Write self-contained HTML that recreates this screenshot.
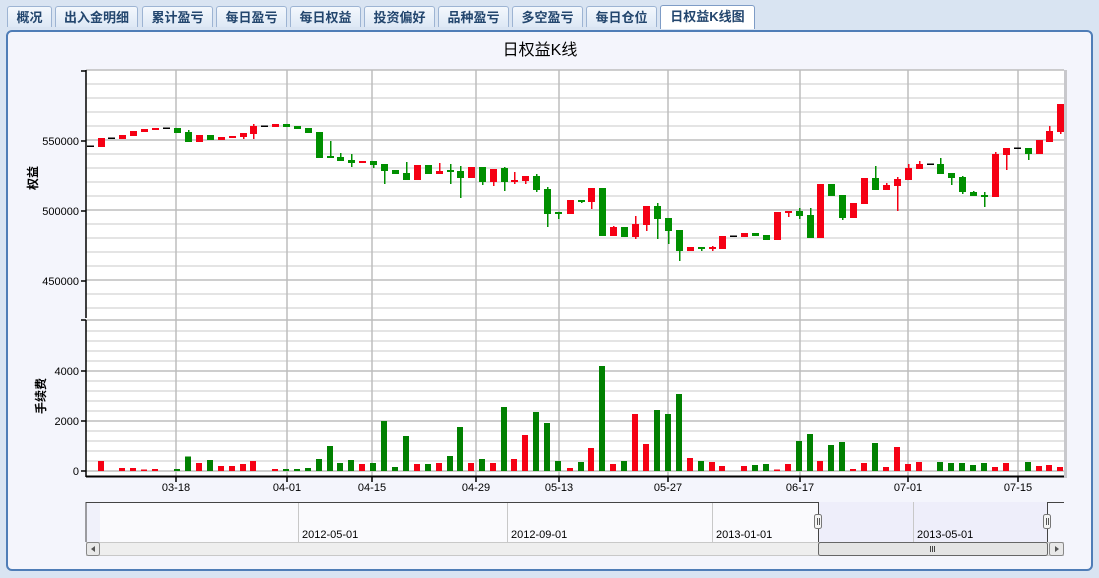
<!DOCTYPE html>
<html><head><meta charset="utf-8"><style>
body{margin:0;width:1099px;height:578px;overflow:hidden;background:#d9e4f2;font-family:"Liberation Sans","Noto Sans CJK SC",sans-serif;}
.tab{position:absolute;top:6px;height:21px;border:1px solid #9db4d3;border-bottom:none;border-radius:3px 3px 0 0;background:linear-gradient(#f4f8fd,#dde8f5);font-size:13px;font-weight:bold;color:#23466e;text-align:center;line-height:21px;box-sizing:border-box}
.tab.a{background:#fff;top:5px;height:24px;border-color:#7e9cc6}
#panel{position:absolute;left:6px;top:30px;width:1087px;height:541px;border:2px solid #4f7db7;border-radius:6px;box-sizing:border-box;background:#f4f5fc}
</style></head><body>
<div class="tab" style="left:7px;width:45px">概况</div>
<div class="tab" style="left:55px;width:83px">出入金明细</div>
<div class="tab" style="left:142px;width:71px">累计盈亏</div>
<div class="tab" style="left:216px;width:71px">每日盈亏</div>
<div class="tab" style="left:290px;width:71px">每日权益</div>
<div class="tab" style="left:364px;width:71px">投资偏好</div>
<div class="tab" style="left:438px;width:71px">品种盈亏</div>
<div class="tab" style="left:512px;width:71px">多空盈亏</div>
<div class="tab" style="left:586px;width:71px">每日仓位</div>
<div class="tab a" style="left:660px;width:95px">日权益K线图</div>
<div id="panel"></div>
<svg width="1099" height="578" style="position:absolute;left:0;top:0" font-family="Liberation Sans, Noto Sans CJK SC, sans-serif">
<text x="540" y="55" font-size="16" text-anchor="middle" fill="#000">日权益K线</text>
<rect x="86" y="70" width="978" height="406" fill="#fff"/>
<rect x="1064" y="70" width="3" height="408" fill="#c8c8cc"/>
<g stroke="#dcdcdc" stroke-width="1.5">
<line x1="86" x2="1064" y1="84" y2="84"/><line x1="86" x2="1064" y1="98" y2="98"/><line x1="86" x2="1064" y1="112" y2="112"/><line x1="86" x2="1064" y1="126" y2="126"/><line x1="86" x2="1064" y1="154" y2="154"/><line x1="86" x2="1064" y1="168" y2="168"/><line x1="86" x2="1064" y1="182" y2="182"/><line x1="86" x2="1064" y1="196" y2="196"/><line x1="86" x2="1064" y1="224" y2="224"/><line x1="86" x2="1064" y1="238" y2="238"/><line x1="86" x2="1064" y1="252" y2="252"/><line x1="86" x2="1064" y1="266" y2="266"/><line x1="86" x2="1064" y1="294" y2="294"/><line x1="86" x2="1064" y1="308" y2="308"/>
<line x1="86" x2="1064" y1="331" y2="331"/><line x1="86" x2="1064" y1="341" y2="341"/><line x1="86" x2="1064" y1="351" y2="351"/><line x1="86" x2="1064" y1="361" y2="361"/><line x1="86" x2="1064" y1="381" y2="381"/><line x1="86" x2="1064" y1="391" y2="391"/><line x1="86" x2="1064" y1="401" y2="401"/><line x1="86" x2="1064" y1="411" y2="411"/><line x1="86" x2="1064" y1="431" y2="431"/><line x1="86" x2="1064" y1="441" y2="441"/><line x1="86" x2="1064" y1="451" y2="451"/><line x1="86" x2="1064" y1="461" y2="461"/>
</g>
<g stroke="#bdbdbd" stroke-width="1.5">
<line x1="86" x2="1064" y1="70" y2="70"/><line x1="86" x2="1064" y1="140" y2="140"/><line x1="86" x2="1064" y1="210" y2="210"/><line x1="86" x2="1064" y1="280" y2="280"/><line x1="86" x2="1064" y1="320" y2="320"/><line x1="86" x2="1064" y1="371" y2="371"/><line x1="86" x2="1064" y1="421" y2="421"/><line x1="86" x2="1064" y1="471" y2="471"/>
<line x1="176" x2="176" y1="70" y2="476"/><line x1="287" x2="287" y1="70" y2="476"/><line x1="372" x2="372" y1="70" y2="476"/><line x1="476" x2="476" y1="70" y2="476"/><line x1="559" x2="559" y1="70" y2="476"/><line x1="668" x2="668" y1="70" y2="476"/><line x1="800" x2="800" y1="70" y2="476"/><line x1="908" x2="908" y1="70" y2="476"/><line x1="1018" x2="1018" y1="70" y2="476"/>
</g>
<g stroke="#000" stroke-width="1.5">
<line x1="86" x2="86" y1="70" y2="318"/><line x1="86" x2="86" y1="320" y2="477"/>
<line x1="81" x2="86" y1="71" y2="71"/><line x1="81" x2="86" y1="141" y2="141"/><line x1="81" x2="86" y1="211" y2="211"/><line x1="81" x2="86" y1="281" y2="281"/><line x1="81" x2="86" y1="320" y2="320"/><line x1="81" x2="86" y1="371" y2="371"/><line x1="81" x2="86" y1="421" y2="421"/><line x1="81" x2="86" y1="471" y2="471"/>
<line x1="86" x2="1064" y1="476.5" y2="476.5" stroke-width="2"/>
<line x1="176" x2="176" y1="477" y2="482"/><line x1="287" x2="287" y1="477" y2="482"/><line x1="372" x2="372" y1="477" y2="482"/><line x1="476" x2="476" y1="477" y2="482"/><line x1="559" x2="559" y1="477" y2="482"/><line x1="668" x2="668" y1="477" y2="482"/><line x1="800" x2="800" y1="477" y2="482"/><line x1="908" x2="908" y1="477" y2="482"/><line x1="1018" x2="1018" y1="477" y2="482"/>
</g>
<g font-size="11" fill="#000" text-anchor="end">
<text x="79" y="145">550000</text><text x="79" y="215">500000</text><text x="79" y="285">450000</text>
<text x="79" y="375">4000</text><text x="79" y="425">2000</text><text x="79" y="475">0</text>
</g>
<g font-size="11" fill="#000" text-anchor="middle">
<text x="176" y="491">03-18</text><text x="287" y="491">04-01</text><text x="372" y="491">04-15</text><text x="476" y="491">04-29</text><text x="559" y="491">05-13</text><text x="668" y="491">05-27</text><text x="800" y="491">06-17</text><text x="908" y="491">07-01</text><text x="1018" y="491">07-15</text>
</g>
<text transform="translate(37,178) rotate(-90)" font-size="12" font-weight="bold" text-anchor="middle">权益</text>
<text transform="translate(45,396) rotate(-90)" font-size="12" font-weight="bold" text-anchor="middle">手续费</text>
<!-- red candles -->
<g fill="#f50014">
<rect x="98" y="138" width="7" height="9"/><rect x="119" y="135" width="7" height="4"/><rect x="130" y="131" width="7" height="5"/><rect x="141" y="129" width="7" height="3"/><rect x="152" y="128" width="7" height="2"/><rect x="196" y="135" width="7" height="7"/><rect x="218" y="137" width="7" height="3"/><rect x="229" y="136" width="7" height="2"/><rect x="240" y="133" width="7" height="4"/><rect x="243" y="133" width="1.5" height="6"/><rect x="250" y="126" width="7" height="8"/><rect x="253" y="124" width="1.5" height="15"/><rect x="272" y="124" width="7" height="3"/><rect x="359" y="161" width="7" height="2"/><rect x="414" y="165" width="7" height="15"/><rect x="436" y="171" width="7" height="3"/><rect x="439" y="163" width="1.5" height="11"/><rect x="468" y="167" width="7" height="11"/><rect x="490" y="169" width="7" height="13"/><rect x="493" y="169" width="1.5" height="17"/><rect x="511" y="180" width="7" height="2"/><rect x="514" y="172" width="1.5" height="12"/><rect x="522" y="176" width="7" height="5"/><rect x="525" y="176" width="1.5" height="8"/><rect x="567" y="200" width="7" height="14"/><rect x="588" y="188" width="7" height="14"/><rect x="591" y="188" width="1.5" height="21"/><rect x="610" y="227" width="7" height="9"/><rect x="613" y="226" width="1.5" height="2"/><rect x="632" y="224" width="7" height="13"/><rect x="635" y="216" width="1.5" height="23"/><rect x="643" y="206" width="7" height="19"/><rect x="646" y="206" width="1.5" height="25"/><rect x="687" y="247" width="7" height="4"/><rect x="709" y="247" width="7" height="2"/><rect x="712" y="246" width="1.5" height="5"/><rect x="719" y="236" width="7" height="13"/><rect x="741" y="233" width="7" height="4"/><rect x="774" y="212" width="7" height="28"/><rect x="785" y="211" width="7" height="2"/><rect x="788" y="211" width="1.5" height="6"/><rect x="817" y="184" width="7" height="54"/><rect x="850" y="203" width="7" height="15"/><rect x="861" y="178" width="7" height="26"/><rect x="883" y="185" width="7" height="5"/><rect x="886" y="183" width="1.5" height="3"/><rect x="894" y="179" width="7" height="7"/><rect x="897" y="177" width="1.5" height="34"/><rect x="905" y="168" width="7" height="12"/><rect x="908" y="164" width="1.5" height="5"/><rect x="916" y="164" width="7" height="5"/><rect x="919" y="161" width="1.5" height="4"/><rect x="992" y="154" width="7" height="43"/><rect x="995" y="152" width="1.5" height="3"/><rect x="1003" y="148" width="7" height="7"/><rect x="1006" y="148" width="1.5" height="22"/><rect x="1036" y="140" width="7" height="14"/><rect x="1046" y="131" width="7" height="11"/><rect x="1049" y="126" width="1.5" height="6"/><rect x="1057" y="104" width="7" height="28"/><rect x="1060" y="130" width="1.5" height="4"/>
</g>
<!-- green candles -->
<g fill="#008f00">
<rect x="174" y="128" width="7" height="5"/><rect x="185" y="132" width="7" height="10"/><rect x="188" y="130" width="1.5" height="3"/><rect x="207" y="135" width="7" height="5"/><rect x="283" y="124" width="7" height="3"/><rect x="294" y="126" width="7" height="3"/><rect x="305" y="128" width="7" height="5"/><rect x="316" y="132" width="7" height="26"/><rect x="327" y="156" width="7" height="2"/><rect x="330" y="141" width="1.5" height="17"/><rect x="337" y="157" width="7" height="4"/><rect x="340" y="153" width="1.5" height="5"/><rect x="348" y="160" width="7" height="3"/><rect x="351" y="154" width="1.5" height="13"/><rect x="370" y="161" width="7" height="4"/><rect x="373" y="161" width="1.5" height="7"/><rect x="381" y="164" width="7" height="7"/><rect x="384" y="164" width="1.5" height="20"/><rect x="392" y="170" width="7" height="4"/><rect x="403" y="173" width="7" height="7"/><rect x="406" y="162" width="1.5" height="12"/><rect x="425" y="165" width="7" height="9"/><rect x="447" y="170" width="7" height="2"/><rect x="450" y="164" width="1.5" height="20"/><rect x="457" y="171" width="7" height="7"/><rect x="460" y="166" width="1.5" height="32"/><rect x="479" y="167" width="7" height="15"/><rect x="482" y="167" width="1.5" height="18"/><rect x="501" y="168" width="7" height="14"/><rect x="504" y="167" width="1.5" height="24"/><rect x="533" y="176" width="7" height="14"/><rect x="536" y="174" width="1.5" height="18"/><rect x="544" y="189" width="7" height="25"/><rect x="547" y="187" width="1.5" height="40"/><rect x="555" y="212" width="7" height="2"/><rect x="558" y="212" width="1.5" height="7"/><rect x="578" y="200" width="7" height="2"/><rect x="581" y="200" width="1.5" height="3"/><rect x="599" y="188" width="7" height="48"/><rect x="621" y="227" width="7" height="10"/><rect x="654" y="206" width="7" height="13"/><rect x="657" y="203" width="1.5" height="36"/><rect x="665" y="218" width="7" height="13"/><rect x="668" y="218" width="1.5" height="26"/><rect x="676" y="230" width="7" height="21"/><rect x="679" y="230" width="1.5" height="31"/><rect x="698" y="247" width="7" height="2"/><rect x="701" y="247" width="1.5" height="4"/><rect x="752" y="233" width="7" height="3"/><rect x="763" y="235" width="7" height="5"/><rect x="796" y="211" width="7" height="5"/><rect x="799" y="208" width="1.5" height="11"/><rect x="807" y="215" width="7" height="23"/><rect x="810" y="208" width="1.5" height="8"/><rect x="828" y="184" width="7" height="12"/><rect x="839" y="195" width="7" height="23"/><rect x="842" y="195" width="1.5" height="25"/><rect x="872" y="178" width="7" height="12"/><rect x="875" y="166" width="1.5" height="13"/><rect x="937" y="164" width="7" height="10"/><rect x="940" y="158" width="1.5" height="7"/><rect x="948" y="173" width="7" height="5"/><rect x="951" y="173" width="1.5" height="12"/><rect x="959" y="177" width="7" height="15"/><rect x="962" y="176" width="1.5" height="18"/><rect x="970" y="192" width="7" height="4"/><rect x="973" y="191" width="1.5" height="2"/><rect x="981" y="195" width="7" height="2"/><rect x="984" y="192" width="1.5" height="15"/><rect x="1025" y="148" width="7" height="6"/><rect x="1028" y="148" width="1.5" height="12"/>
</g>
<g fill="#000">
<rect x="87" y="145.5" width="7" height="1.5"/><rect x="108" y="137.5" width="7" height="1.5"/><rect x="163" y="127.5" width="7" height="1.5"/><rect x="261" y="125.5" width="7" height="1.5"/><rect x="730" y="235.5" width="7" height="1.5"/><rect x="927" y="163.5" width="7" height="1.5"/><rect x="1014" y="147.5" width="7" height="1.5"/>
</g>
<!-- volume red -->
<g fill="#f50014">
<rect x="98" y="461" width="6" height="10"/><rect x="119" y="468" width="6" height="3"/><rect x="130" y="468" width="6" height="3"/><rect x="141" y="469.5" width="6" height="1.5"/><rect x="152" y="469" width="6" height="2"/><rect x="196" y="463" width="6" height="8"/><rect x="218" y="466" width="6" height="5"/><rect x="229" y="466" width="6" height="5"/><rect x="240" y="464" width="6" height="7"/><rect x="250" y="461" width="6" height="10"/><rect x="272" y="469" width="6" height="2"/><rect x="359" y="464" width="6" height="7"/><rect x="414" y="464" width="6" height="7"/><rect x="436" y="463" width="6" height="8"/><rect x="468" y="463" width="6" height="8"/><rect x="490" y="463" width="6" height="8"/><rect x="511" y="459" width="6" height="12"/><rect x="522" y="435" width="6" height="36"/><rect x="567" y="468" width="6" height="3"/><rect x="588" y="448" width="6" height="23"/><rect x="610" y="464" width="6" height="7"/><rect x="632" y="414" width="6" height="57"/><rect x="643" y="444" width="6" height="27"/><rect x="687" y="458" width="6" height="13"/><rect x="709" y="462" width="6" height="9"/><rect x="719" y="466" width="6" height="5"/><rect x="741" y="466" width="6" height="5"/><rect x="774" y="469.5" width="6" height="1.5"/><rect x="785" y="464" width="6" height="7"/><rect x="817" y="461" width="6" height="10"/><rect x="850" y="469" width="6" height="2"/><rect x="861" y="463" width="6" height="8"/><rect x="883" y="467" width="6" height="4"/><rect x="894" y="447" width="6" height="24"/><rect x="905" y="464" width="6" height="7"/><rect x="916" y="462" width="6" height="9"/><rect x="992" y="467" width="6" height="4"/><rect x="1003" y="463" width="6" height="8"/><rect x="1036" y="466" width="6" height="5"/><rect x="1046" y="465" width="6" height="6"/><rect x="1057" y="467" width="6" height="4"/>
</g>
<g fill="#008000">
<rect x="174" y="469" width="6" height="2"/><rect x="185" y="456.5" width="6" height="14.5"/><rect x="207" y="460" width="6" height="11"/><rect x="283" y="469" width="6" height="2"/><rect x="294" y="469" width="6" height="2"/><rect x="305" y="468" width="6" height="3"/><rect x="316" y="459" width="6" height="12"/><rect x="327" y="446" width="6" height="25"/><rect x="337" y="463" width="6" height="8"/><rect x="348" y="460" width="6" height="11"/><rect x="370" y="463" width="6" height="8"/><rect x="381" y="421" width="6" height="50"/><rect x="392" y="467" width="6" height="4"/><rect x="403" y="436" width="6" height="35"/><rect x="425" y="464" width="6" height="7"/><rect x="447" y="456" width="6" height="15"/><rect x="457" y="427" width="6" height="44"/><rect x="479" y="459" width="6" height="12"/><rect x="501" y="407" width="6" height="64"/><rect x="533" y="412" width="6" height="59"/><rect x="544" y="423" width="6" height="48"/><rect x="555" y="461" width="6" height="10"/><rect x="578" y="462" width="6" height="9"/><rect x="599" y="366" width="6" height="105"/><rect x="621" y="461" width="6" height="10"/><rect x="654" y="410" width="6" height="61"/><rect x="665" y="414" width="6" height="57"/><rect x="676" y="394" width="6" height="77"/><rect x="698" y="461" width="6" height="10"/><rect x="752" y="465" width="6" height="6"/><rect x="763" y="464" width="6" height="7"/><rect x="796" y="441" width="6" height="30"/><rect x="807" y="434" width="6" height="37"/><rect x="828" y="445" width="6" height="26"/><rect x="839" y="442" width="6" height="29"/><rect x="872" y="443" width="6" height="28"/><rect x="937" y="462" width="6" height="9"/><rect x="948" y="463" width="6" height="8"/><rect x="959" y="463" width="6" height="8"/><rect x="970" y="465" width="6" height="6"/><rect x="981" y="463" width="6" height="8"/><rect x="1025" y="462" width="6" height="9"/>
</g>
<!-- navigator -->
<rect x="86" y="502" width="732" height="40" fill="#fafafd"/>
<rect x="86" y="502" width="14" height="40" fill="#f0f1fa"/>
<rect x="818" y="502" width="229" height="40" fill="#eeeefa"/>
<g stroke="#c8c8c8" stroke-width="1"><line x1="298.5" x2="298.5" y1="502" y2="542"/><line x1="507.5" x2="507.5" y1="502" y2="542"/><line x1="712.5" x2="712.5" y1="502" y2="542"/><line x1="913.5" x2="913.5" y1="502" y2="542"/></g>
<path d="M86 542V502.5H818.5V542M1047.5 542V502.5H1064" fill="none" stroke="#444" stroke-width="1"/>
<g font-size="11" fill="#000"><text x="302" y="538">2012-05-01</text><text x="511" y="538">2012-09-01</text><text x="716" y="538">2013-01-01</text><text x="917" y="538">2013-05-01</text></g>
<rect x="814.5" y="514.5" width="7" height="14" rx="2" fill="#f4f4f4" stroke="#777"/>
<rect x="1043.5" y="514.5" width="7" height="14" rx="2" fill="#f4f4f4" stroke="#777"/>
<g stroke="#555"><line x1="817.5" x2="817.5" y1="518" y2="525"/><line x1="819.5" x2="819.5" y1="518" y2="525"/><line x1="1046.5" x2="1046.5" y1="518" y2="525"/><line x1="1048.5" x2="1048.5" y1="518" y2="525"/></g>
<rect x="86" y="542" width="978" height="14" fill="#eeeeee"/>
<line x1="86" x2="1064" y1="542.5" y2="542.5" stroke="#c8c8c8"/>
<line x1="86" x2="1064" y1="555.5" y2="555.5" stroke="#c8c8c8"/>
<rect x="86.5" y="542.5" width="13" height="13" rx="2" fill="#e8e8e8" stroke="#888"/>
<path d="M95 546L91 549L95 552Z" fill="#555"/>
<rect x="1049.5" y="542.5" width="14" height="13" rx="2" fill="#e8e8e8" stroke="#888"/>
<path d="M1055 546L1059 549L1055 552Z" fill="#555"/>
<rect x="818.5" y="542.5" width="229" height="13" rx="2" fill="#e4e4e4" stroke="#666"/>
<g stroke="#444"><line x1="930.5" x2="930.5" y1="546" y2="552"/><line x1="932.5" x2="932.5" y1="546" y2="552"/><line x1="934.5" x2="934.5" y1="546" y2="552"/></g>
</svg>
</body></html>
